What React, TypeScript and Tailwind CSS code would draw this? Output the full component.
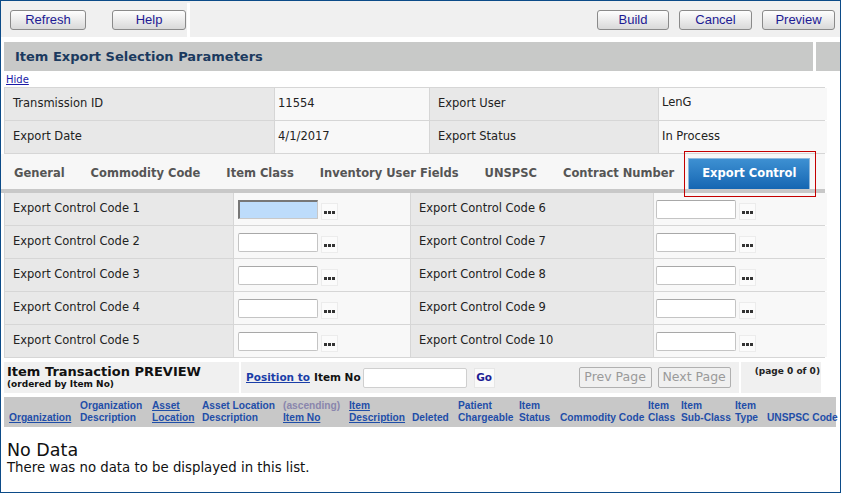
import React from "react";

const V = "font-['DejaVu_Sans',sans-serif]";
const T = "font-['Liberation_Sans',Arial,sans-serif]";

function Btn({ children, w }: { children: React.ReactNode; w: string }) {
  return (
    <div
      className={`${w} h-[20px] flex items-center justify-center rounded-[3px] border border-[#8a8a8a] bg-gradient-to-b from-[#fefefe] to-[#d9d9d9] text-[13px] text-[#1d1a94] ${T}`}
    >
      {children}
    </div>
  );
}

function Dots() {
  return (
    <div className="w-[17px] h-[17px] mt-[4px] bg-[#fbfbfb] border border-[#ececec] flex items-end justify-center gap-[1px] pb-[5px]">
      <span className="w-[3px] h-[3px] bg-[#333]" />
      <span className="w-[3px] h-[3px] bg-[#333]" />
      <span className="w-[3px] h-[3px] bg-[#333]" />
    </div>
  );
}

function Input({ focused }: { focused?: boolean }) {
  return focused ? (
    <div className="w-[80px] h-[19px] bg-[#bddcfb] border-t-2 border-l-2 border-b border-r border-t-[#777] border-l-[#777] border-b-[#c8c8c8] border-r-[#c8c8c8]" />
  ) : (
    <div className="w-[80px] h-[19px] bg-white border border-[#c4c4c4] border-t-[#a8a8a8] rounded-[2px]" />
  );
}

const headers: { l1?: string; l2: string; link1?: boolean; link2?: boolean; gray1?: boolean; w: string }[] = [
  { l2: "Organization", link2: true, w: "w-[71px]" },
  { l1: "Organization", l2: "Description", w: "w-[71px]" },
  { l1: "Asset", l2: "Location", link1: true, link2: true, w: "w-[49px]" },
  { l1: "Asset Location", l2: "Description", w: "w-[80px]" },
  { l1: "(ascending)", l2: "Item No", gray1: true, link2: true, w: "w-[65px]" },
  { l1: "Item", l2: "Description", link1: true, link2: true, w: "w-[62px]" },
  { l2: "Deleted", w: "w-[45px]" },
  { l1: "Patient", l2: "Chargeable", w: "w-[60px]" },
  { l1: "Item", l2: "Status", w: "w-[40px]" },
  { l2: "Commodity Code", w: "w-[87px]" },
  { l1: "Item", l2: "Class", w: "w-[32px]" },
  { l1: "Item", l2: "Sub-Class", w: "w-[53px]" },
  { l1: "Item", l2: "Type", w: "w-[32px]" },
  { l2: "UNSPSC Code", w: "flex-1" },
];

export default function App() {
  const left = ["Export Control Code 1", "Export Control Code 2", "Export Control Code 3", "Export Control Code 4", "Export Control Code 5"];
  const right = ["Export Control Code 6", "Export Control Code 7", "Export Control Code 8", "Export Control Code 9", "Export Control Code 10"];
  const tabs = ["General", "Commodity Code", "Item Class", "Inventory User Fields", "UNSPSC", "Contract Number"];
  return (
    <div className={`w-[843px] h-[494px] bg-white ${V}`}>
      <div className="relative w-[841px] h-[493px] border border-[#0c4b88] flex flex-col">
        {/* toolbar */}
        <div className="flex h-[36px] bg-[#f0f0f0] pt-[2px]">
          <div className="w-[189px] flex items-center pl-[9px] gap-[26px] border-r-[3px] border-white">
            <Btn w="w-[76px]">Refresh</Btn>
            <Btn w="w-[74px]">Help</Btn>
          </div>
          <div className="flex-1 flex items-center justify-end gap-[10px] pr-[5px]">
            <Btn w="w-[72px]">Build</Btn>
            <Btn w="w-[73px]">Cancel</Btn>
            <Btn w="w-[73px]">Preview</Btn>
          </div>
        </div>
        {/* header */}
        <div className="flex h-[29px] mt-[5px] ml-[3px] gap-[3px]">
          <div className="w-[809px] bg-[#c8c9c8] flex items-center pl-[11px] text-[13px] font-bold text-[#1b3a5f]">
            Item Export Selection Parameters
          </div>
          <div className="flex-1 bg-[#c8c9c8]" />
        </div>
        <div className="h-[16px] pl-[5px] pt-[3px] text-[10px] leading-[11px] text-[#1a1aa6] underline">Hide</div>
        {/* info table */}
        <div className="ml-[3px] w-[821px] grid grid-cols-[269px_154px_228px_168px] gap-px bg-[#d6d6d6] border border-[#d6d6d6] text-[11.5px] text-[#222]">
          <div className="h-[32px] bg-[#e8e8e8] flex items-center pl-[8px]">Transmission ID</div>
          <div className="h-[32px] bg-[#f8f8f8] flex items-center pl-[3px]">11554</div>
          <div className="h-[32px] bg-[#e8e8e8] flex items-center pl-[8px]">Export User</div>
          <div className="h-[32px] bg-[#f8f8f8] flex items-center pl-[3px] pb-[2px]">LenG</div>
          <div className="h-[32px] bg-[#e8e8e8] flex items-center pl-[8px]">Export Date</div>
          <div className="h-[32px] bg-[#f8f8f8] flex items-center pl-[3px]">4/1/2017</div>
          <div className="h-[32px] bg-[#e8e8e8] flex items-center pl-[8px]">Export Status</div>
          <div className="h-[32px] bg-[#f8f8f8] flex items-center pl-[3px]">In Process</div>
        </div>
        {/* tabs */}
        <div className="w-[824px] h-[35px] bg-[#f7f7f7] flex items-end">
          {tabs.map((t) => (
            <div key={t} className="h-[31px] px-[13px] flex items-center text-[11.5px] font-bold text-[#555] whitespace-nowrap">
              {t}
            </div>
          ))}
          <div className="ml-[1px] h-[31px] px-[13px] flex items-center text-[11.5px] font-bold text-white bg-gradient-to-b from-[#3d90d2] to-[#1466b2] border border-[#8fb8dc] border-b-0 whitespace-nowrap">
            Export Control
          </div>
        </div>
        <div className="w-[824px] h-[4px] bg-[#c8c8c8]" />
        {/* export control grid */}
        <div className="ml-[3px] w-[821px] grid grid-cols-[228px_176px_242px_173px] gap-px bg-[#d6d6d6] border border-[#d6d6d6] border-t-0 text-[11.5px] text-[#222]">
          {left.map((l, i) => (
            <React.Fragment key={l}>
              <div className="h-[32px] bg-[#e8e8e8] flex items-center pl-[8px]">{l}</div>
              <div className="h-[32px] bg-[#f8f8f8] flex items-center pl-[4px] gap-[3px]">
                <Input focused={i === 0} />
                <Dots />
              </div>
              <div className="h-[32px] bg-[#e8e8e8] flex items-center pl-[8px]">{right[i]}</div>
              <div className="h-[32px] bg-[#f8f8f8] flex items-center pl-[2px] gap-[3px]">
                <Input />
                <Dots />
              </div>
            </React.Fragment>
          ))}
        </div>
        {/* preview bar */}
        <div className="flex h-[31px] mt-[4px] ml-[3px] gap-[2px]">
          <div className="w-[235px] bg-[#f0f0f0] pl-[3px] pt-[2px] text-[#111]">
            <div className="text-[13px] font-bold leading-[15px]">Item Transaction PREVIEW</div>
            <div className="text-[9px] font-bold leading-[11px]">(ordered by Item No)</div>
          </div>
          <div className="w-[498px] bg-[#f0f0f0] flex items-center text-[10.5px] font-bold">
            <span className="ml-[5px] text-[#1a3ea8] underline">Position to</span>
            <span className="ml-[4px] text-[#111]">Item No</span>
            <div className="ml-[2px] w-[104px] h-[20px] bg-white border border-[#cfcfcf] rounded-[2px]" />
            <div className="ml-[7px] w-[21px] h-[20px] bg-[#fafafa] border border-[#e6e6e6] flex items-center justify-center text-[#1c1c94]">Go</div>
            <div className="ml-[84px] w-[73px] h-[21px] border border-[#b0b0b0] rounded-[2px] flex items-center justify-center text-[12.5px] font-normal text-[#9a9a9a] whitespace-nowrap">Prev Page</div>
            <div className="ml-[6px] w-[73px] h-[21px] border border-[#b0b0b0] rounded-[2px] flex items-center justify-center text-[12.5px] font-normal text-[#9a9a9a] whitespace-nowrap">Next Page</div>
          </div>
          <div className="w-[80px] bg-[#f0f0f0] text-[9px] font-bold text-[#222] text-right pr-[1px] pt-[4px] leading-[11px]">(page 0 of 0)</div>
        </div>
        {/* list header */}
        <div className={`flex h-[30px] mt-[4px] ml-[3px] w-[832px] bg-[#c8c8c8] gap-px text-[10.2px] font-bold leading-[12px] ${T}`}>
          {headers.map((h, i) => (
            <div key={i} className={`${h.w} ${h.w === "flex-1" ? "min-w-0 pl-[3px]" : "shrink-0"} flex flex-col justify-end pb-[3px] whitespace-nowrap ${i === 0 ? "pl-[5px]" : i === 13 ? "" : "pl-[4px]"}`}>
              {h.l1 && (
                <span className={`${h.gray1 ? "text-[#8a86ad]" : "text-[#1f4ea8]"} ${h.link1 ? "underline" : ""}`}>{h.l1}</span>
              )}
              <span className={`text-[#1f4ea8] ${h.link2 ? "underline" : ""}`}>{h.l2}</span>
            </div>
          ))}
        </div>
        <div className="pl-[6px] pt-[13px] text-[#111]">
          <div className="text-[17.5px] leading-[20px]">No Data</div>
          <div className="text-[13.3px] leading-[16px]">There was no data to be displayed in this list.</div>
        </div>
        {/* annotation highlight */}
        <div className="absolute left-[683px] top-[150px] w-[132px] h-[46px] border-[1.5px] border-[#c40000]" />
      </div>
    </div>
  );
}
